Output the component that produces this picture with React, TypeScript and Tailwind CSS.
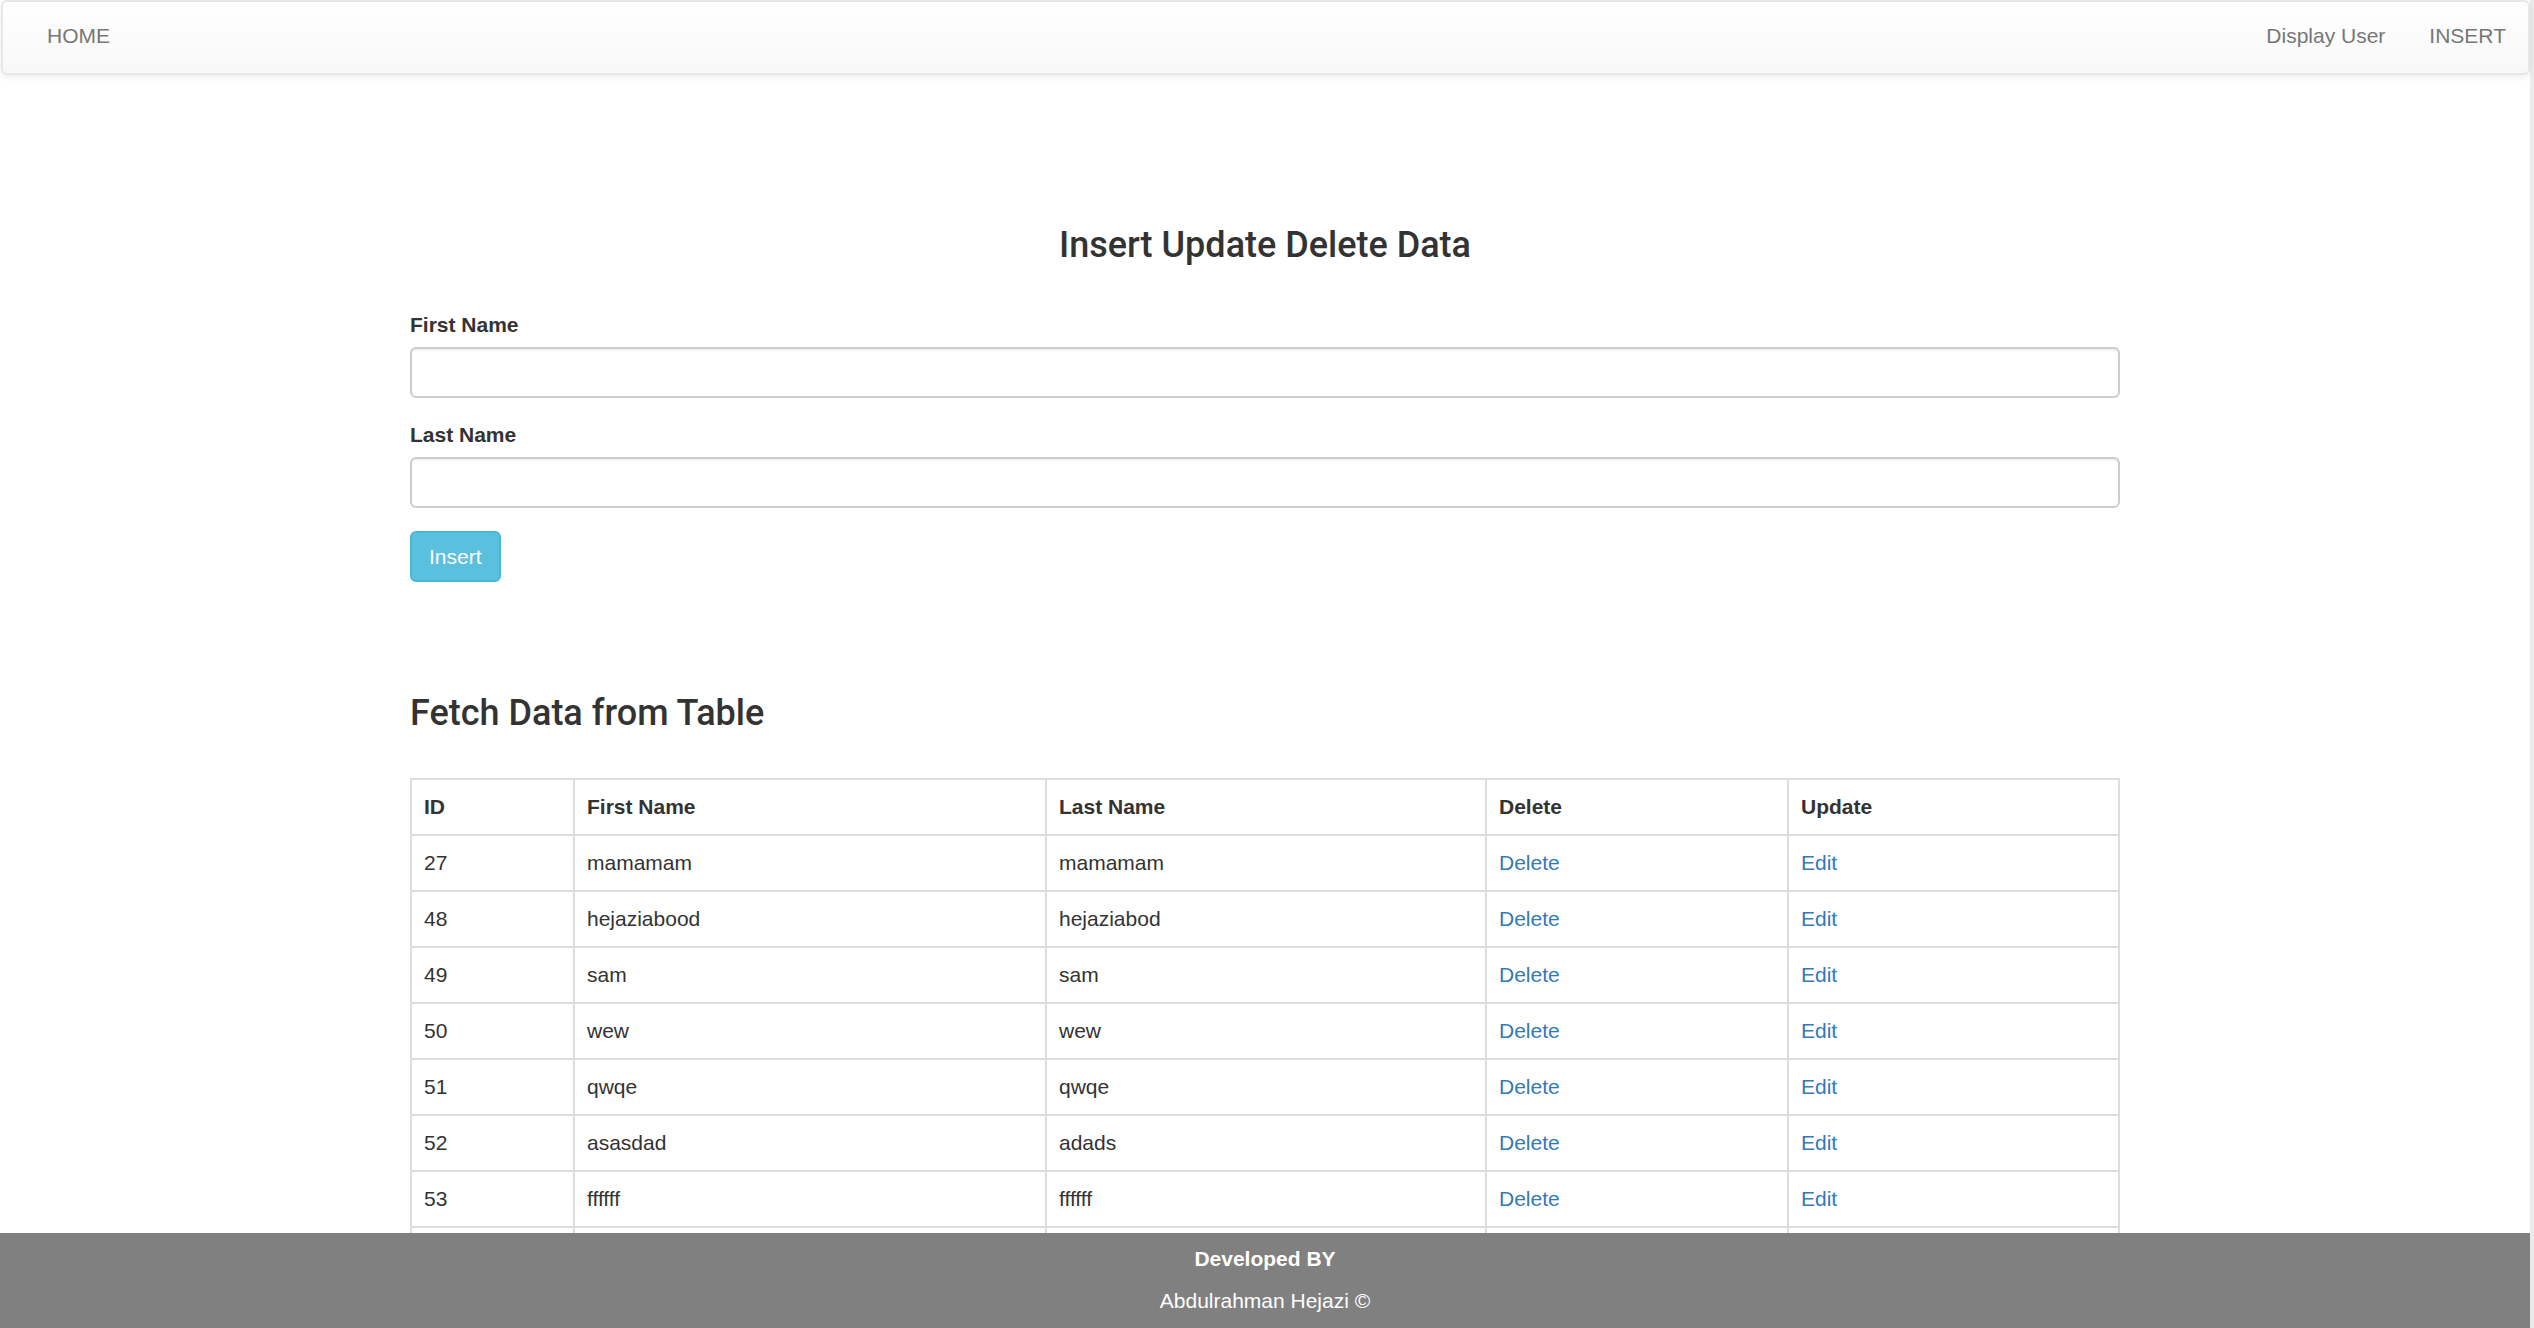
import React from 'react';

const rows = [
  { id: 27, first: 'mamamam', last: 'mamamam' },
  { id: 48, first: 'hejaziabood', last: 'hejaziabod' },
  { id: 49, first: 'sam', last: 'sam' },
  { id: 50, first: 'wew', last: 'wew' },
  { id: 51, first: 'qwqe', last: 'qwqe' },
  { id: 52, first: 'asasdad', last: 'adads' },
  { id: 53, first: 'ffffff', last: 'ffffff' },
  { id: 54, first: 'test', last: 'test' },
];

const heading = { fontFamily: 'Roboto, "Liberation Sans", Arial, sans-serif' };

function Field({ label }: { label: string }) {
  return (
    <div className="flex flex-col">
      <label className="font-bold leading-[30px] mb-[7px]">{label}</label>
      <input
        type="text"
        className="h-[51px] w-full rounded-[6px] border-2 border-[#ccc] bg-white px-[18px] shadow-[inset_0_1.5px_1.5px_rgba(0,0,0,0.075)] outline-none"
      />
    </div>
  );
}

export default function App() {
  return (
    <div
      className="h-screen w-full overflow-hidden bg-white text-[21px] leading-[30px] text-[#333] flex"
      style={{ fontFamily: '"Liberation Sans", Arial, sans-serif' }}
    >
      <div className="relative flex-1 flex flex-col">
        <nav className="ml-[1px] h-[75px] rounded-[6px] border-2 border-[#e7e7e7] bg-gradient-to-b from-white to-[#f8f8f8] shadow-[0_1.5px_7px_rgba(0,0,0,0.075)] flex items-center justify-between text-[#777]">
          <div className="pl-[22px] flex">
            <a className="px-[22px] pt-[19px] pb-[22px]">HOME</a>
          </div>
          <div className="flex">
            <a className="px-[22px] pt-[19px] pb-[22px]">Display User</a>
            <a className="px-[22px] pt-[19px] pb-[22px]">INSERT</a>
          </div>
        </nav>

        <div className="mx-auto w-[1710px] flex flex-col">
          <h3 className="mt-[150px] text-center text-[36px] leading-[40px] font-medium" style={heading}>
            Insert Update Delete Data
          </h3>

          <form className="mt-[45px] flex flex-col gap-[22px]">
            <Field label="First Name" />
            <Field label="Last Name" />
            <div className="pt-[1px]">
              <button
                type="button"
                className="h-[51px] rounded-[6px] border-2 border-[#46b8da] bg-[#5bc0de] px-[17px] text-white"
              >
                Insert
              </button>
            </div>
          </form>

          <h3 className="mt-[111px] text-[36px] leading-[40px] font-medium" style={heading}>
            Fetch Data from Table
          </h3>

          <table className="mt-[45px] w-full border-collapse border-2 border-[#ddd]">
            <thead>
              <tr className="text-left">
                <th className="w-[163px] border-2 border-[#ddd] px-[12px] py-[12px] font-bold">ID</th>
                <th className="w-[472px] border-2 border-[#ddd] px-[12px] py-[12px] font-bold">First Name</th>
                <th className="w-[440px] border-2 border-[#ddd] px-[12px] py-[12px] font-bold">Last Name</th>
                <th className="w-[302px] border-2 border-[#ddd] px-[12px] py-[12px] font-bold">Delete</th>
                <th className="border-2 border-[#ddd] px-[12px] py-[12px] font-bold">Update</th>
              </tr>
            </thead>
            <tbody>
              {rows.map((r) => (
                <tr key={r.id}>
                  <td className="border-2 border-[#ddd] px-[12px] py-[12px]">{r.id}</td>
                  <td className="border-2 border-[#ddd] px-[12px] py-[12px]">{r.first}</td>
                  <td className="border-2 border-[#ddd] px-[12px] py-[12px]">{r.last}</td>
                  <td className="border-2 border-[#ddd] px-[12px] py-[12px]">
                    <a className="text-[#337ab7]">Delete</a>
                  </td>
                  <td className="border-2 border-[#ddd] px-[12px] py-[12px]">
                    <a className="text-[#337ab7]">Edit</a>
                  </td>
                </tr>
              ))}
            </tbody>
          </table>
        </div>

        {/* fixed footer sits over the table */}
        <footer className="absolute bottom-0 left-0 right-0 h-[95px] bg-[#808080] pt-[11px] flex flex-col items-center gap-[12px] text-white">
          <p className="font-bold">Developed BY</p>
          <p>Abdulrahman Hejazi ©</p>
        </footer>
      </div>
      <div className="w-[4px] bg-[#ebebeb]" />
    </div>
  );
}
